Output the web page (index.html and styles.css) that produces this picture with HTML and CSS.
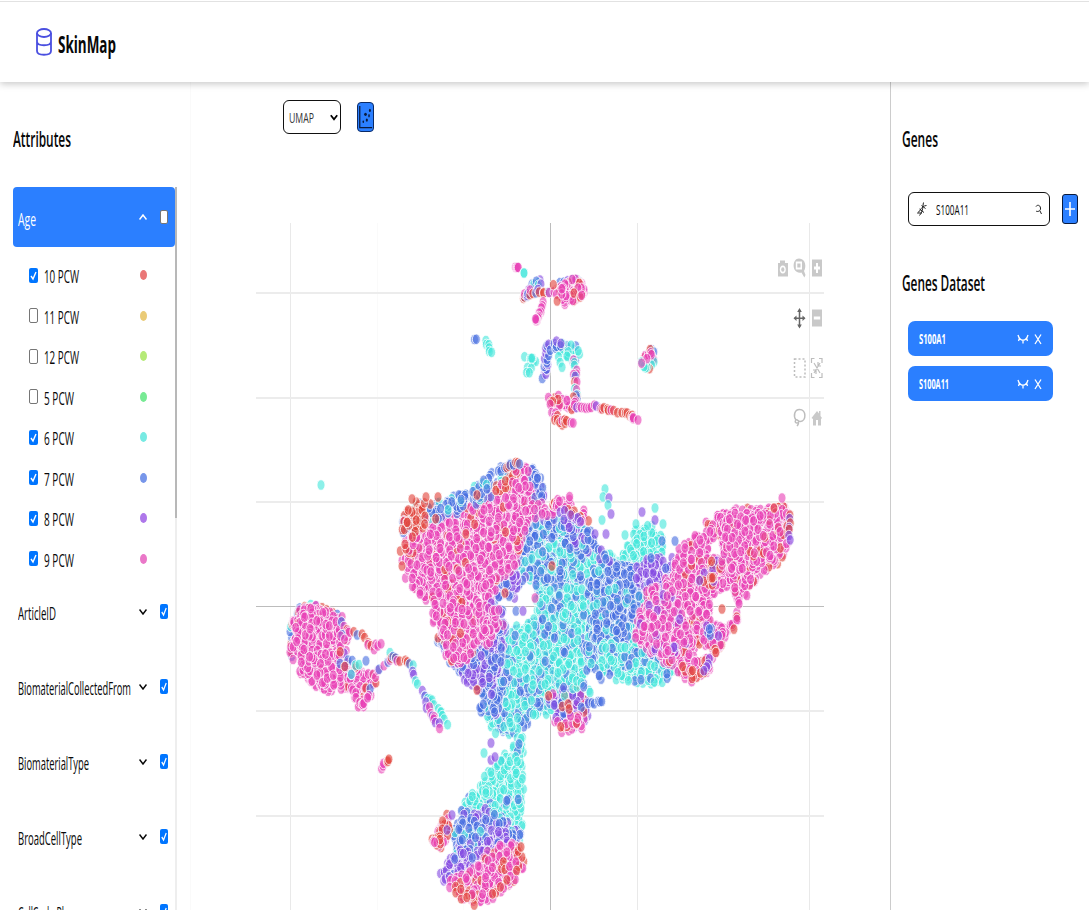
FILE: index.html
```html
<!DOCTYPE html>
<html lang="en">
<head>
<meta charset="utf-8">
<title>SkinMap</title>
<link rel="stylesheet" href="styles.css">
</head>
<body>
<header class="topbar">
  <svg class="logo" viewBox="0 0 16 28" preserveAspectRatio="none" fill="none" stroke="#4a4fe0" stroke-width="1.8"><ellipse cx="8" cy="5" rx="7" ry="4"/><path d="M1 5v18c0 5 14 5 14 0V5M1 13.500c0 5 14 5 14 0"/></svg>
  <h1 class="brand"><span class="fit" data-w="58">SkinMap</span></h1>
</header>
<div class="layout">
  <aside class="sidebar">
    <h2 class="heading"><span class="fit" data-w="58">Attributes</span></h2>
    <div class="scroller">
      <div class="list">
        <div class="attr active"><span class="fit" data-w="18">Age</span><svg class="chev" viewBox="0 0 8 6"><path d="M.5 5.500 4 1l3.500 4.500"/></svg><i class="box plain"></i></div>
        <div class="values" id="values"></div>
        <div id="attrs"></div>
      </div>
      <div class="track"><div class="thumb"></div></div>
    </div>
  </aside>
  <main class="main">
    <div class="tools">
      <div class="select"><span class="fit" data-w="25">UMAP</span><svg viewBox="0 0 8 7" class="caret"><path d="M.8 1.300 4 5.300 7.200 1.300"/></svg></div>
      <button class="dots" aria-label="Scatter"><svg viewBox="0 0 17 30"><path d="M2 2.500v24.500h14" fill="none" stroke="#0a1a3c" stroke-width="1.400"/><g fill="#0a1a3c"><ellipse cx="8.500" cy="12" rx="1.500" ry="1.900"/><ellipse cx="13.500" cy="7.500" rx="1.100" ry="1.800"/><ellipse cx="12.500" cy="13.500" rx=".9" ry="2"/><ellipse cx="10" cy="18.500" rx="1.200" ry="1.800"/><ellipse cx="6" cy="20.500" rx=".9" ry="1.400"/></g></svg></button>
    </div>
    <div class="plot">
      <canvas id="plot" width="568" height="687"></canvas>
      <svg class="modebar" viewBox="775 255 50 175">
        <g fill="#c9c9c9">
          <path fill-rule="evenodd" d="M778 263h2v-2.500h5v2.500h3v13.500H778zM782.800 265.500c-4 0-4 8 0 8s4-8 0-8z"/><ellipse cx="782.800" cy="269.500" rx="1.600" ry="2.200"/>
          <path fill-rule="evenodd" d="M799 258.500c7 0 7.500 9 5 12.500l1.500 4-1.200 2.500-2.800-5c-10 2-10-14-2.500-14zM795.800 261.500v8h6.200v-8z"/><path d="M797.300 263.500h3.200v4h-3.200z"/>
          <path fill-rule="evenodd" d="M812 259.500h10v17h-10zM816 263v3.500h-2v3h2v3.500h2v-3.500h2v-3h-2V263z"/>
          <path fill-rule="evenodd" d="M812 309.500h10v17h-10zM813.800 316.500v3h6.400v-3z"/>
          <path d="m811.500 418 5.500-7 2 2.500V411h1.500v5l1.500 2-1 1v6.500h-3V420h-2v5.500h-3V419z"/>
        </g>
        <path d="M799.500 310v17M794.500 318.300h10" stroke="#666" stroke-width="1.500"/><path fill="#666" d="m799.500 308 2.300 4h-4.600zM799.500 328.500l2.300-4h-4.600zM793.500 318.300l3-2.800v5.600zM805.500 318.300l-3-2.800v5.600z"/>
        <g fill="none" stroke="#bdbdbd">
          <path stroke-dasharray="2 2" stroke-width="1.500" d="M794.500 359H805v18h-10.500z"/>
          <path stroke-width="1.200" d="M811.500 363v-4.500h3M819 358.500h3v4.500M822 373v4.500h-3M814.500 377.500h-3V373M814 363l6 10M820 363l-6 10M818 362v4h3M813 370h3v4"/>
          <path stroke-width="1.500" d="M796 420c-3-4-1.500-10.500 3.500-10.500 7 0 7 11.500 1 12-2 0-4-3-5-1s1 3 2.500 2c1-1 .5 2-1 3.500"/>
        </g>
      </svg>
    </div>
  </main>
  <aside class="genes">
    <h2 class="heading"><span class="fit" data-w="36">Genes</span></h2>
    <div class="search">
      <div class="field">
        <svg class="dna" viewBox="0 0 12 16"><path d="M7.500 1.500c-1 4 0 8-4 13M10.500 4.500C5 5 5 9.500 1.500 12M5.500 4.500l4 3M3.500 8l4.500 3.500M1.500 12H6"/></svg>
        <span class="fit" data-w="33">S100A11</span>
        <svg class="lens" viewBox="0 0 7 11"><path d="M1 2.500C2 .8 5 .5 5.500 4S2 8 1 7M5 7l1.500 3"/></svg>
      </div>
      <button class="add" aria-label="Add"><svg viewBox="0 0 10 16"><path d="M5 1v14M0 8h10"/></svg></button>
    </div>
    <h2 class="heading second"><span class="fit" data-w="83">Genes Dataset</span></h2>
    <div class="chip"><span class="fit" data-w="27">S100A1</span><svg class="acts" viewBox="0 0 26 14"><path d="M1 3c2 7 8 7 10 0M2.500 6 1.500 9M6 8.500V11.500M9.500 6l1 3M18 2.500l6 9.500M24 2.500 18 12"/></svg></div>
    <div class="chip"><span class="fit" data-w="30">S100A11</span><svg class="acts" viewBox="0 0 26 14"><path d="M1 3c2 7 8 7 10 0M2.500 6 1.500 9M6 8.500V11.500M9.500 6l1 3M18 2.500l6 9.500M24 2.500 18 12"/></svg></div>
  </aside>
</div>
<script src="app.js"></script>
</body>
</html>
```
FILE: styles.css
```css
* { box-sizing: border-box; }
body { margin: 0; height: 910px; overflow: hidden; background: #fff; color: #080808; font-family: "Open Sans", "Noto Sans", sans-serif; }
h1, h2 { margin: 0; }
button { padding: 0; font: inherit; }
.fit { display: block; flex: none; white-space: nowrap; transform-origin: 0 50%; }
.topbar { position: relative; height: 82px; border-top: 1px solid #fff; box-shadow: inset 0 1px #e2e2e2, 0 2px 7px rgba(0,0,0,.22); display: flex; align-items: center; padding: 4px 0 0 36px; background: #fff; }
.logo { width: 16px; height: 28px; margin: -4px 6px 0 0; }
.brand { font-size: 24px; line-height: 30px; font-weight: 700; }
.layout { display: grid; grid-template-columns: 191px 700px 1fr; height: 828px; }
.heading { font-size: 21px; line-height: 30px; font-weight: 600; }
.sidebar { padding: 42px 0 0 13px; border-right: 1px solid #fafafa; }
.scroller { display: flex; margin-top: 33px; height: 723px; overflow: hidden; }
.list { width: 162px; }
.track { width: 2px; background: #eee; }
.thumb { height: 331px; background: #b8b8b8; }
.attr { height: 75px; display: flex; align-items: center; padding: 0 7px 0 5px; font-size: 18px; }
.attr .fit { margin-top: 3px; }
.attr.active { height: 60px; background: #2b7fff; color: #fff; border-radius: 4px; }
.chev { width: 8px; height: 6px; margin-left: auto; margin-right: 13px; fill: none; stroke: currentColor; stroke-width: 1.500; }
.box { width: 8px; height: 15px; flex: none; border-radius: 2px; background: #0075ff; display: flex; }
.box svg { width: 100%; height: 100%; fill: none; stroke: #fff; stroke-width: 1.400; }
.box.plain { background: #fff; border: 1px solid #767676; }
.active .box { height: 14px; margin-top: -1px; }
.values { height: 327px; padding: 8px 0 0 16px; }
.value { height: 40.500px; display: flex; align-items: center; font-size: 18px; }
.value .box { width: 9px; margin-right: 6px; }
.value .fit { margin-top: 2px; }
.swatch { width: 7px; height: 10px; border-radius: 50%; margin: 0 28px 0 auto; }
.main { border-right: 1px solid #ccc; }
.tools { display: flex; gap: 16px; align-items: center; padding: 18px 0 0 92px; height: 52px; }
.select { width: 58px; height: 34px; border: 1px solid #111; border-radius: 6px; display: flex; align-items: center; justify-content: space-between; padding: 0 2px 0 5px; font-size: 15px; color: #333; }
.caret { width: 8px; height: 7px; fill: none; stroke: #000; stroke-width: 1.800; }
.dots { width: 17px; height: 30px; border: 1px solid #0a2a66; border-radius: 4px; background: #2b7fff; overflow: hidden; }
.dots svg { display: block; width: 100%; height: 100%; }
.plot { position: relative; width: 568px; margin: 89px 0 0 65px; }
.plot canvas { display: block; }
.modebar { position: absolute; left: 519px; top: 32px; width: 50px; height: 175px; }
.genes { padding: 42px 0 0 11px; }
.search { display: flex; align-items: center; gap: 12px; margin: 38px 0 0 6px; }
.field { width: 142px; height: 34px; border: 1px solid #111; border-radius: 6px; display: flex; align-items: center; padding: 0 7px 0 7px; font-size: 14px; }
.dna { width: 12px; height: 16px; margin-right: 8px; fill: none; stroke: #222; }
.lens { width: 7px; height: 11px; margin-left: auto; fill: none; stroke: #222; }
.add { width: 16px; height: 30px; border: 1px solid #0a1a3c; border-radius: 3px; background: #2b7fff; display: flex; align-items: center; justify-content: center; }
.add svg { width: 10px; height: 16px; fill: none; stroke: #fff; stroke-width: 1.600; }
.second { margin: 42px 0 23px; }
.chip { width: 145px; height: 35px; margin: 0 0 10px 6px; border-radius: 7px; background: #2b7fff; color: #fff; display: flex; align-items: center; justify-content: space-between; padding: 0 10px 0 11px; font-size: 14.500px; font-weight: 700; }
.acts { width: 26px; height: 14px; fill: none; stroke: #fff; stroke-width: 1.300; }
```
FILE: app.js
```js
const tick = '<svg viewBox="0 0 9 15" preserveAspectRatio="none"><path d="M2 8l2 3 3-7"/></svg>';
const ages = [['10 PCW',1,'#ea7777',35],['11 PCW',0,'#eacb77',35],['12 PCW',0,'#b5ea77',35],['5 PCW',0,'#77ea94',30],['6 PCW',1,'#77eae3',30],['7 PCW',1,'#7796ea',30],['8 PCW',1,'#ae77ea',30],['9 PCW',1,'#ea77c8',30]];
document.getElementById('values').innerHTML = ages.map(a =>
  `<div class="value"><i class="box ${a[1] ? '' : 'plain'}">${a[1] ? tick : ''}</i><span class="fit" data-w="${a[3]}">${a[0]}</span><i class="swatch" style="background:${a[2]}"></i></div>`).join('');
document.getElementById('attrs').innerHTML = [['ArticleID',38],['BiomaterialCollectedFrom',113],['BiomaterialType',71],['BroadCellType',64],['CellCycle Phase',63]].map(a =>
  `<div class="attr"><span class="fit" data-w="${a[1]}">${a[0]}</span><svg class="chev" viewBox="0 0 8 6"><path d="M.5 .5 4 5 7.500 .5"/></svg><i class="box">${tick}</i></div>`).join('');

document.querySelectorAll('.fit').forEach(el => {
  el.style.width = 'max-content';
  const natural = el.getBoundingClientRect().width, w = +el.dataset.w;
  el.style.width = w + 'px';
  el.style.transform = `scaleX(${w / natural})`;
});

const ctx = document.getElementById('plot').getContext('2d');
ctx.translate(-256, -223);
const line = (x, y, w, h, c) => { ctx.fillStyle = c; ctx.fillRect(x, y, w, h); };
[[290,'#e9e9e9'],[377,'#fafafa'],[463,'#fcfcfc'],[637,'#e9e9e9'],[809,'#e9e9e9']].forEach(g => line(g[0], 223, 1, 687, g[1]));
[292,397,501,710,815].forEach(y => line(256, y, 568, 2, '#ececec'));
line(550, 223, 1, 687, '#bcbcbc');
line(256, 606, 568, 1, '#bcbcbc');

let seed = 7321;
const rnd = () => { seed = (seed + 0x6D2B79F5) | 0; let t = Math.imul(seed ^ seed >>> 15, 1 | seed); t = t + Math.imul(t ^ t >>> 7, 61 | t) ^ t; return ((t ^ t >>> 14) >>> 0) / 4294967296; };
const colors = { r: '226,70,62', c: '70,230,220', b: '72,112,224', v: '134,76,226', p: '232,66,182' };
const dot = (x, y, k) => {
  ctx.beginPath(); ctx.ellipse(x, y, 4, 5.300, 0, 0, 7);
  ctx.fillStyle = `rgba(${colors[k]},.62)`; ctx.fill();
  ctx.strokeStyle = 'rgba(255,255,255,.9)'; ctx.lineWidth = .9; ctx.stroke();
};
// Gaps inside the clusters: cx, cy, rx, ry.
const holes = [[525,594,12,8],[517,617,15,9],[505,603,9,6],[723,609,13,18],[716,548,7,11],[704,652,9,6],[491,757,8,12],[505,745,8,8],[357,645,10,18]];
const inside = (x, y, p) => { let c = false; for (let i = 0, j = p.length - 2; i < p.length; j = i, i += 2) if ((p[i+1] > y) !== (p[j+1] > y) && x < (p[j]-p[i])*(y-p[i+1])/(p[j+1]-p[i+1])+p[i]) c = !c; return c; };
const region = (mix, p, density = 1) => {
  const xs = p.filter((_, i) => i % 2 === 0), ys = p.filter((_, i) => i % 2);
  const x0 = Math.min(...xs), x1 = Math.max(...xs), y0 = Math.min(...ys), y1 = Math.max(...ys);
  const n = (x1 - x0) * (y1 - y0) / 9 * density;
  for (let i = 0; i < n; i++) {
    const x = x0 + rnd() * (x1 - x0), y = y0 + rnd() * (y1 - y0), k = mix[Math.floor(rnd() * mix.length)];
    const jx = x + (rnd() - .5) * 6, jy = y + (rnd() - .5) * 7;
    if (inside(x, y, p) && !holes.some(h => ((jx-h[0])/h[2])**2 + ((jy-h[1])/h[3])**2 < 1)) dot(jx, jy, k);
  }
};
const trail = (mix, p, n, s = 2) => { for (let i = 0; i < n; i++) { const t = i / Math.max(1, n - 1) * (p.length / 2 - 1), a = Math.min(Math.floor(t), p.length / 2 - 2), f = t - a; dot(p[2*a] + (p[2*a+2]-p[2*a])*f + (rnd()-.5)*s, p[2*a+1] + (p[2*a+3]-p[2*a+1])*f + (rnd()-.5)*s*1.500, mix[Math.floor(rnd()*mix.length)]); } };

// Central body
region('ccccccbbb', [530,535,548,522,575,535,600,556,602,600,594,660,575,690,550,712,520,728,500,738,489,724,488,690,500,650,515,630,538,615]);
region('ccccccc', [620,555,635,532,650,524,663,535,662,565,640,585,610,570], .7);
region('ccc', [603,556,614,552,620,570,608,575], .6);
region('bbbbbbbcc', [600,562,620,568,648,568,668,570,655,600,640,640,615,650,592,640,596,610,590,585]);
region('cccccbb', [588,645,620,642,660,650,680,670,662,682,635,682,610,676,592,665], .8);
region('bbbbc', [586,640,593,655,606,675,600,679,585,663], .5);
region('bbbbvc', [534,505,552,515,590,530,600,552,580,552,555,535,538,540,522,580,520,555]);
region('bbbcc', [522,560,540,550,565,575,545,583,515,575], .5);
region('bbbbbvc', [476,660,510,640,508,680,495,715,483,716,478,690], .8);
region('ccccccbb', [508,625,535,625,540,660,515,680,500,660,500,640], .5);
region('vvvbbb', [438,640,452,665,478,688,500,676,505,620,525,580,510,565,495,600,480,635]);
region('pppppppppppppppppr', [408,540,404,560,411,585,430,606,439,640,449,659,465,662,480,642,490,604,494,584,514,565,524,530,536,502,538,484,526,466,513,472,493,496,462,512,425,526]);
region('pppppv', [480,640,490,604,498,590,501,625,486,645], .5);
region('bbbbc', [403,512,420,504,440,501,470,489,498,470,517,463,514,470,488,496,455,514,420,520,402,534], .6);
region('bbbv', [530,467,541,478,545,492,541,502,536,492], 1);
region('rrrrrp', [403,518,411,505,434,502,436,520,417,530,404,557,400,550], .4);
region('rrrp', [487,493,516,467,519,474,492,501], .7);
region('ppppp', [500,500,524,468,538,488,528,520], .25);
trail('bbrb', [505,467,512,464,519,463], 8, 2);
region('pppv', [532,507,545,503,560,505,550,515,535,520], .5);
region('pppppr', [550,503,568,496,578,506,588,517,583,523,565,518], .7);
region('rr', [579,511,586,515,588,523,581,523], .6);
region('vvvp', [560,512,578,515,583,525,570,532,560,525], .3);
region('vvvb', [635,570,650,558,678,560,690,575,680,600,650,600]);
region('vvvb', [598,551,604,548,612,564,600,564], .5);

// Right wing
region('ppppppppr', [648,592,671,580,680,553,700,535,718,514,745,511,778,508,784,503,790,520,788,543,779,560,764,570,745,595,732,630,709,671,691,680,665,660,636,643,638,620]);
region('ppppppv', [636,618,655,598,675,590,690,640,670,658,638,644], .7);
region('rrrvp', [705,574,712,558,730,555,712,590,694,584], .4);
region('rrrvp', [674,668,710,668,727,635,716,650,702,675,690,682], .5);
region('vb', [702,626,720,629,716,638,702,635], .5);
region('ppppppppr', [722,517,750,512,785,510,787,537,768,561,735,575,722,560]);
trail('vr', [789,514,790,539], 7);

// Lower stem and foot
region('ccccccccb', [520,728,522,764,523,824,500,826,475,816,462,818,466,803,482,785,490,768,510,750], .8);
region('bbbbvc', [462,813,500,811,510,826,522,830,515,845,490,860,456,856,456,825]);
region('vvvvb', [452,855,480,848,507,828,510,850,465,885,444,879,443,869], .9);
region('ppppppr', [450,880,475,866,500,846,520,844,523,858,518,875,503,891,477,902,460,898]);
region('rrrrp', [449,882,463,890,485,895,510,874,521,844,522,864,509,885,480,904,458,896], .5);
region('pr', [437,828,447,816,452,817,446,834,438,846,434,840], 1);
region('pr', [433,836,442,842,441,847,434,846], 1);
region('vvvpbr', [550,695,575,690,587,700,587,720,574,728,552,718]);
region('pppr', [556,721,583,717,579,730,564,733], 1);
trail('b', [588,704,597,702,600,703], 6, 4);
trail('bc', [563,690,582,680,588,690], 10, 8);

// Left cluster with its tail
trail('bcvr', [292,655,290,632,300,609,312,605,337,615], 22, 3);
region('pppppppppppr', [293,628,300,612,312,606,335,615,350,632,346,650,349,665,365,672,372,684,361,710,350,691,317,688,300,670,292,650]);
region('ppppppp', [294,630,310,608,336,618,341,650,338,688,305,678], .5);
trail('ppprb', [340,618,347,630,355,633], 8, 5);
trail('rvpb', [345,635,340,655,348,665,356,670], 15, 8);
trail('rpcrp', [362,636,368,644,376,647,382,642], 9, 4);
trail('rpb', [359,702,373,683,377,672,388,661], 14, 6);
trail('pppp', [352,690,361,706,369,695], 9, 4);
trail('bc', [351,674,357,665,359,664,389,652], 5, 3);
trail('rpbr', [391,657,398,659,411,664], 9, 3);
trail('vvcc', [412,664,416,680,424,694,430,702], 10, 3);
trail('c', [430,699,440,711,447,722], 9, 4);
trail('vvp', [426,703,432,716,440,727], 10, 3);
trail('p', [382,768,384,764], 3, 1);
trail('r', [387,762,389,759], 3, 1);

// Upper islands
trail('p', [516,268,518,267], 4, 1); dot(524,273,'c'); dot(524,273,'c'); dot(540,280,'v');
trail('cvb', [529,287,536,281,540,287], 8, 4);
trail('vrpb', [522,298,530,292,550,291], 17, 3);
trail('p', [544,302,541,313,536,320,536,320], 11);
trail('cbv', [560,282,572,279,580,282], 7, 2);
region('ppppprp', [554,287,575,281,584,285,583,295,564,303,556,300], 1.400);
trail('b', [474,339,476,339], 2, 1);
trail('c', [486,341,491,353], 6, 2);
region('ccccb', [557,345,566,341,579,347,582,355,575,360,561,353], 1.200);
trail('c', [526,356,535,359,529,362,529,374], 12, 5);
trail('vvbb', [543,377,546,365,548,349,560,342], 26, 5);
trail('ccv', [559,358,562,367], 3);
trail('cbrpp', [575,358,575,376,576,392,574,402], 17, 4);
region('ppprp', [548,399,557,397,570,400,578,403,571,410,553,403], 1.200);
trail('ppr', [550,401,555,414,562,424,571,422], 20, 5);
trail('pvpp', [577,408,597,406], 9, 2);
trail('rrpprp', [600,408,612,410,630,415,634,419], 17, 2); dot(638,420,'p');
trail('prbcp', [642,361,649,353,652,351,654,362,646,369,642,363], 17, 3);
trail('pr', [650,350,651,355,642,363], 5, 1);

// Isolated cells
[[321,485,'c'],[605,489,'c'],[603,497,'c'],[609,498,'v'],[608,505,'c'],[611,514,'v'],[602,520,'c'],[595,534,'v'],[606,534,'v'],[642,512,'v'],[655,508,'c'],[655,520,'v'],[636,524,'c'],[663,524,'c'],[675,541,'b'],[625,535,'c'],[662,541,'b'],[651,558,'b'],[782,498,'p'],[774,508,'r'],[722,609,'r'],[412,499,'r'],[426,497,'r'],[438,497,'r'],[477,495,'r'],[402,566,'r'],[420,594,'p'],[552,566,'r'],[536,585,'b'],[505,593,'r'],[535,598,'p'],[516,611,'b'],[523,611,'v'],[491,743,'v'],[484,753,'c'],[491,760,'v'],[495,757,'v'],[519,744,'b'],[477,690,'r'],[568,704,'r'],[569,709,'r'],[700,540,'p'],[685,548,'p'],[452,815,'v'],[447,830,'v'],[521,847,'r']].forEach(d => dot(...d));
```
